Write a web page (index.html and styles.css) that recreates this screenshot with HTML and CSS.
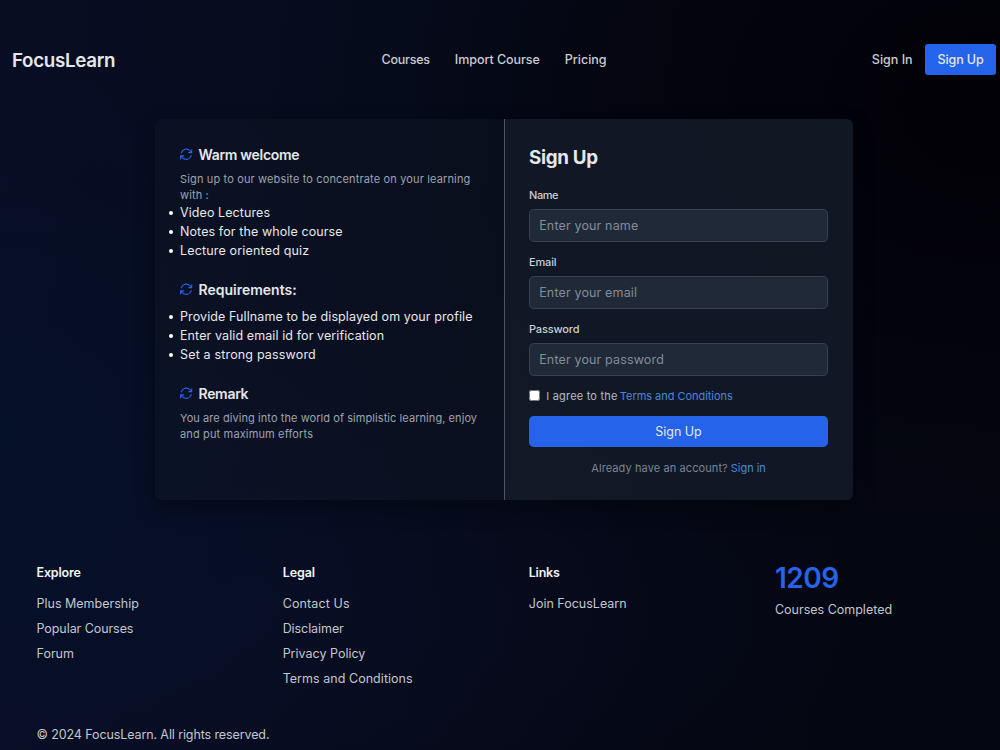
FILE: index.html
```
<!DOCTYPE html>
<html lang="en">
<head>
<meta charset="utf-8">
<title>FocusLearn</title>
<link rel="stylesheet" href="styles.css">
</head>
<body>
<svg width="0" height="0" class="sprite" aria-hidden="true">
  <symbol id="refresh" viewBox="2 2 20 20">
    <path d="M16.023 9.348h4.992v-.001M2.985 19.644v-4.992m0 0h4.992m-4.993 0 3.181 3.183a8.25 8.25 0 0 0 13.803-3.7M4.031 9.865a8.25 8.25 0 0 1 13.803-3.7l3.181 3.182m0-4.991v4.99"/>
  </symbol>
</svg>
<header class="nav">
  <a class="logo">FocusLearn</a>
  <nav class="nav-links"><a class="t-courses">Courses</a><a class="t-import">Import Course</a><a>Pricing</a></nav>
  <div class="nav-auth"><a class="signin">Sign In</a><a class="signup">Sign Up</a></div>
</header>
<main class="card">
  <section class="info">
    <h2 class="title t-tight"><svg class="icon"><use href="#refresh"/></svg>Warm welcome</h2>
    <p class="copy">Sign up to our website to concentrate on your learning<br>with :</p>
    <ul class="list">
      <li class="t-video">Video Lectures</li>
      <li>Notes for the whole course</li>
      <li class="t-wide">Lecture oriented quiz</li>
    </ul>
    <h2 class="title spaced"><svg class="icon"><use href="#refresh"/></svg>Requirements:</h2>
    <ul class="list gap">
      <li>Provide Fullname to be displayed om your profile</li>
      <li>Enter valid email id for verification</li>
      <li class="t-wide">Set a strong password</li>
    </ul>
    <h2 class="title spaced t-tight"><svg class="icon"><use href="#refresh"/></svg>Remark</h2>
    <p class="copy"><span class="t-diving">You are diving into the world of simplistic learning, enjoy</span><br>and put maximum efforts</p>
  </section>
  <form class="form">
    <h1 class="form-title">Sign Up</h1>
    <label class="field"><span class="label t-name">Name</span><input class="input" type="text" placeholder="Enter your name"></label>
    <label class="field"><span class="label">Email</span><input class="input" type="email" placeholder="Enter your email"></label>
    <label class="field"><span class="label">Password</span><input class="input" type="password" placeholder="Enter your password"></label>
    <label class="agree"><input class="check" type="checkbox"><span class="agree-text">I agree to the</span><a class="link">Terms and Conditions</a></label>
    <button class="submit" type="button">Sign Up</button>
    <p class="already"><span>Already have an account?</span><a class="link">Sign in</a></p>
  </form>
</main>
<footer class="footer">
  <div class="columns">
    <div class="column"><h3 class="heading t-explore">Explore</h3><a>Plus Membership</a><a class="t-popular">Popular Courses</a><a>Forum</a></div>
    <div class="column"><h3 class="heading">Legal</h3><a class="t-contact">Contact Us</a><a class="t-popular">Disclaimer</a><a>Privacy Policy</a><a class="t-terms">Terms and Conditions</a></div>
    <div class="column"><h3 class="heading t-links">Links</h3><a>Join FocusLearn</a></div>
    <div class="column"><strong class="count">1209</strong><span>Courses Completed</span></div>
  </div>
  <p class="copyright">© 2024 FocusLearn. All rights reserved.</p>
</footer>
</body>
</html>
```
FILE: styles.css
```
* { box-sizing: border-box; }
body {
  margin: 0;
  height: 750px;
  overflow: hidden;
  font-family: Inter, sans-serif;
  font-size: 12.5px;
  line-height: 19.1px;
  color: #e5e7eb;
  background:
    radial-gradient(ellipse 420px 420px at 0% 58%, rgba(4, 17, 44, .7), rgba(4, 17, 44, 0)),
    radial-gradient(ellipse 620px 460px at 100% 14%, rgba(2, 0, 6, .9), rgba(2, 0, 6, 0)),
    radial-gradient(ellipse 700px 260px at 15% 82%, rgba(9, 16, 42, .6), rgba(9, 16, 42, 0)),
    linear-gradient(98deg, #080d22 0%, #060b1c 35%, #050714 65%, #040611 100%);
}
h1, h2, h3, p, ul { margin: 0; padding: 0; }
.sprite { position: absolute; }

.nav {
  display: grid;
  grid-template-columns: 369.5px 1fr auto;
  align-items: center;
  padding: 43.5px 4px 0 12px;
  font-weight: 500;
  color: #c9ccd3;
}
.logo { padding-top: 2px; font-size: 18.75px; font-weight: 600; letter-spacing: -.308px; color: #e5e7eb; }
.nav-links { display: flex; gap: 25px; }
.t-courses { letter-spacing: -.22px; }
.t-import { letter-spacing: -.047px; }
.nav-auth { display: flex; align-items: center; gap: 12.5px; }
.signup {
  padding: 6px 12.5px;
  border-radius: 3px;
  background: #2563eb;
  color: #e5e7eb;
  letter-spacing: -.13px;
}

.card {
  display: grid;
  grid-template-columns: 349px 349px;
  width: 698px;
  height: 381.5px;
  margin: 44px 0 0 155px;
  border-radius: 6.25px;
  overflow: hidden;
  background: rgba(17, 24, 39, .42);
  box-shadow: 0 8px 20px rgba(0, 0, 0, .35);
}
.info { padding: 25.5px 0 0 25px; }
.title {
  display: flex;
  align-items: center;
  gap: 6px;
  font-size: 14px;
  line-height: 22px;
  font-weight: 600;
}
.spaced { margin-top: 18.7px; }
.t-tight { letter-spacing: -.31px; }
.icon {
  width: 12.5px;
  height: 12.5px;
  margin-bottom: 1.5px;
  fill: none;
  stroke: #2563eb;
  stroke-width: 1.8;
  stroke-linecap: round;
  stroke-linejoin: round;
}
.copy {
  margin-top: 6px;
  font-size: 11px;
  line-height: 15.6px;
  letter-spacing: .146px;
  color: #9ca3af;
  white-space: nowrap;
}
.t-diving { letter-spacing: .068px; }
.list { list-style: none; letter-spacing: .1px; }
.list li { display: flex; align-items: center; margin-left: -10.8px; white-space: nowrap; }
.list li::before {
  content: "";
  width: 4.2px;
  height: 4.2px;
  margin: 0 6.6px 0 0;
  border-radius: 50%;
  background: #fff;
}
.gap { margin-top: 6px; }
.t-video { letter-spacing: .08px; }
.t-wide { letter-spacing: .17px; }

.form {
  display: flex;
  flex-direction: column;
  padding: 25px 25px 0 24px;
  border-left: 1px solid #50545f;
  background: rgba(23, 31, 43, .62);
}
.form-title { margin-bottom: 17.1px; font-size: 18.75px; line-height: 27px; font-weight: 700; letter-spacing: -.31px; }
.field { display: block; margin-bottom: 12.2px; }
.label {
  display: block;
  margin-bottom: 5.4px;
  font-size: 11px;
  line-height: 15.6px;
  font-weight: 500;
  letter-spacing: -.15px;
  color: #c9ccd3;
}
.label.t-name { letter-spacing: -.43px; }
.field + .field { margin-top: .8px; }
.input {
  display: block;
  width: 299px;
  height: 33px;
  padding: 0 9.2px;
  border: 1px solid #374151;
  border-radius: 4.7px;
  outline: none;
  background: #1f2937;
  color: #e5e7eb;
  font: inherit;
  letter-spacing: .15px;
}
.input::placeholder { color: #858c99; opacity: 1; }
.agree { display: flex; align-items: center; height: 16px; font-size: 11px; color: #b8bcc5; }
.agree-text { width: 73.5px; letter-spacing: .189px; }
.agree-text, .agree .link { padding-top: 1px; }
.check { width: 11px; height: 11px; margin: 0 6px 0 .3px; }
.link { color: #4589d8; letter-spacing: -.037px; }
.submit {
  width: 299px;
  height: 31px;
  margin-top: 12.2px;
  border: 0;
  border-radius: 4.7px;
  background: #2563eb;
  color: #e5e7eb;
  font: inherit;
}
.already {
  display: flex;
  justify-content: center;
  gap: 3px;
  margin-top: 11.6px;
  font-size: 11px;
  color: #7e8490;
  letter-spacing: .095px;
}

.footer { padding: 62.5px 0 0 36.5px; color: #c3c6ce; }
.columns { display: grid; grid-template-columns: repeat(4, 246.15px); height: 153px; }
.column { display: flex; flex-direction: column; gap: 5.9px; }
.heading {
  margin-bottom: 6px;
  font-size: 12.5px;
  font-weight: 600;
  line-height: 19.1px;
  letter-spacing: -.057px;
  color: #f3f4f6;
}
.heading.t-explore { letter-spacing: -.157px; }
.heading.t-links { letter-spacing: -.243px; }
.t-popular { letter-spacing: -.07px; }
.t-contact { letter-spacing: .13px; }
.t-terms { letter-spacing: .042px; }
.count { margin-bottom: .8px; font-size: 28px; line-height: 31px; font-weight: 600; letter-spacing: -.45px; color: #2563eb; }
.copyright { margin-top: 9px; letter-spacing: -.106px; }
```
